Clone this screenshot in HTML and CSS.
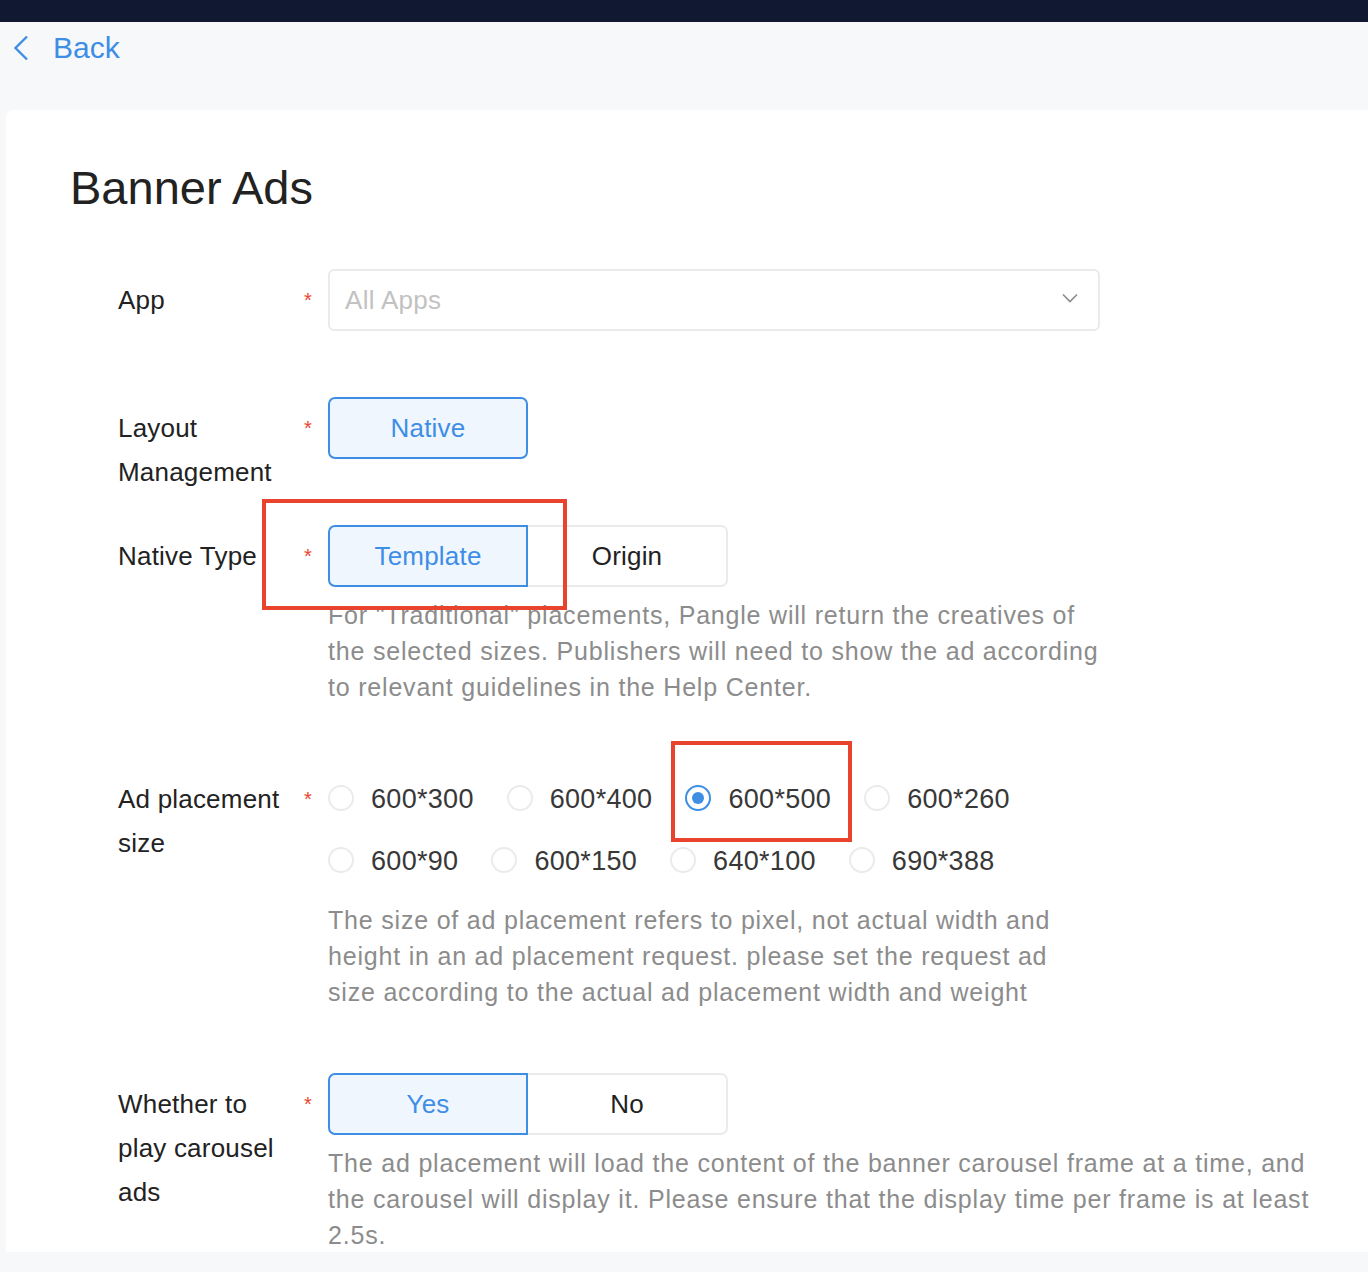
FILE: index.html
```html
<!DOCTYPE html>
<html>
<head>
<meta charset="utf-8">
<link rel="stylesheet" href="styles.css">
</head>
<body>
<div class="topbar"></div>
<div class="backrow">
  <svg class="back-icon" width="18" height="26" viewBox="0 0 18 26"><path d="M15 1.5 L3.5 13 L15 24.5" fill="none" stroke="#3e8ee6" stroke-width="2.4"/></svg>
  <span class="back-text">Back</span>
</div>
<div class="card">
  <h1 class="title">Banner Ads</h1>

  <div class="item item-app">
    <div class="label">App</div>
    <div class="req">*</div>
    <div class="control">
      <div class="select">
        <span class="placeholder">All Apps</span>
        <svg class="chev" width="16" height="10" viewBox="0 0 16 10"><path d="M1 1.5 L8 8.5 L15 1.5" fill="none" stroke="#8a8a8a" stroke-width="1.6"/></svg>
      </div>
    </div>
  </div>

  <div class="item item-layout">
    <div class="label">Layout<br>Management</div>
    <div class="req">*</div>
    <div class="control">
      <div class="btn btn-single active">Native</div>
    </div>
  </div>

  <div class="item item-native">
    <div class="label">Native Type</div>
    <div class="req">*</div>
    <div class="control">
      <div class="seg">
        <div class="btn seg-left active">Template</div>
        <div class="btn seg-right">Origin</div>
      </div>
      <div class="help">For "Traditional" placements, Pangle will return the creatives of<br>the selected sizes. Publishers will need to show the ad according<br>to relevant guidelines in the Help Center.</div>
    </div>
  </div>

  <div class="item item-size">
    <div class="label">Ad placement<br>size</div>
    <div class="req">*</div>
    <div class="control">
      <div class="radios">
        <div class="radio-row">
          <label class="radio"><span class="dot"></span><span class="rtext">600*300</span></label>
          <label class="radio"><span class="dot"></span><span class="rtext">600*400</span></label>
          <label class="radio checked"><span class="dot"></span><span class="rtext">600*500</span></label>
          <label class="radio"><span class="dot"></span><span class="rtext">600*260</span></label>
        </div>
        <div class="radio-row">
          <label class="radio"><span class="dot"></span><span class="rtext">600*90</span></label>
          <label class="radio"><span class="dot"></span><span class="rtext">600*150</span></label>
          <label class="radio"><span class="dot"></span><span class="rtext">640*100</span></label>
          <label class="radio"><span class="dot"></span><span class="rtext">690*388</span></label>
        </div>
      </div>
      <div class="help">The size of ad placement refers to pixel, not actual width and<br>height in an ad placement request. please set the request ad<br>size according to the actual ad placement width and weight</div>
    </div>
  </div>

  <div class="item item-carousel">
    <div class="label">Whether to<br>play carousel<br>ads</div>
    <div class="req">*</div>
    <div class="control">
      <div class="seg">
        <div class="btn seg-left active">Yes</div>
        <div class="btn seg-right">No</div>
      </div>
      <div class="help">The ad placement will load the content of the banner carousel frame at a time, and<br>the carousel will display it. Please ensure that the display time per frame is at least<br>2.5s.</div>
    </div>
  </div>
</div>

<div class="mark mark-native"></div>
<div class="mark mark-size"></div>
</body>
</html>
```

FILE: styles.css
```css
html, body {
  margin: 0;
  padding: 0;
}
body {
  background: #f7f8fa;
  font-family: "Liberation Sans", Arial, sans-serif;
  color: #222;
  width: 1368px;
  height: 1272px;
  overflow: hidden;
  position: relative;
}
.topbar {
  height: 22px;
  background: #111831;
}
.backrow {
  height: 52px;
  display: flex;
  align-items: center;
  padding-left: 12px;
  margin-bottom: 36px;
}
.back-text {
  margin-left: 23px;
  font-size: 30px;
  line-height: 36px;
  color: #3e8ee6;
}
.card {
  background: #fff;
  margin-left: 6px;
  border-top-left-radius: 8px;
  padding: 50px 0 0 64px;
  height: 1142px;
  box-sizing: border-box;
}
.title {
  margin: 0;
  font-weight: normal;
  font-size: 47px;
  line-height: 56px;
  color: #222;
}
.item {
  display: flex;
  align-items: flex-start;
}
.label {
  width: 184px;
  padding-left: 48px;
  padding-top: 9px;
  font-size: 26px;
  letter-spacing: 0.2px;
  line-height: 44px;
  color: #222;
}
.req {
  width: 26px;
  padding-top: 9px;
  font-size: 20px;
  line-height: 44px;
  color: #e8452f;
  box-sizing: border-box;
  padding-left: 2px;
}
.control {
  display: flex;
  flex-direction: column;
}
.item-app { margin-top: 53px; }
.item-layout { margin-top: 66px; }
.item-native { margin-top: 31px; }
.item-size { margin-top: 63px; }
.item-carousel { margin-top: 63px; }

.select {
  width: 772px;
  height: 62px;
  box-sizing: border-box;
  border: 2px solid #ebebeb;
  border-radius: 6px;
  display: flex;
  align-items: center;
  justify-content: space-between;
  padding: 0 20px 0 15px;
}
.placeholder {
  font-size: 26px;
  color: #c2c2c2;
  letter-spacing: 0.3px;
}
.chev {
  margin-top: -4px;
}
.btn {
  width: 200px;
  height: 62px;
  box-sizing: border-box;
  display: flex;
  align-items: center;
  justify-content: center;
  font-size: 26px;
  letter-spacing: 0.2px;
  color: #222;
  border: 2px solid #ebebeb;
  background: #fff;
}
.btn.active {
  border-color: #3e8ee6;
  background: #eff6fe;
  color: #3e8ee6;
}
.btn-single {
  border-radius: 7px;
}
.seg {
  display: flex;
}
.seg-left {
  border-radius: 7px 0 0 7px;
}
.seg-right {
  border-left: none;
  border-radius: 0 7px 7px 0;
}
.help {
  margin-top: 10px;
  font-size: 25px;
  letter-spacing: 0.8px;
  line-height: 36px;
  color: #8c8c8c;
  white-space: nowrap;
}
.radio-row {
  display: flex;
  height: 62px;
  align-items: center;
}
.radio {
  display: flex;
  align-items: center;
  margin-right: 33px;
}
.dot {
  width: 26px;
  height: 26px;
  box-sizing: border-box;
  border: 2px solid #ebebeb;
  border-radius: 50%;
  display: flex;
  align-items: center;
  justify-content: center;
  margin-top: -3px;
}
.radio.checked .dot {
  border-color: #3e8ee6;
}
.radio.checked .dot::after {
  content: "";
  width: 12px;
  height: 12px;
  border-radius: 50%;
  background: #3e8ee6;
}
.rtext {
  margin-left: 17px;
  font-size: 27px;
  letter-spacing: 0.3px;
  color: #383838;
}
.mark {
  position: absolute;
  border: 4px solid #e8432d;
  box-sizing: border-box;
}
.mark-native {
  left: 262px;
  top: 499px;
  width: 305px;
  height: 111px;
}
.mark-size {
  left: 671px;
  top: 741px;
  width: 181px;
  height: 101px;
}
```
